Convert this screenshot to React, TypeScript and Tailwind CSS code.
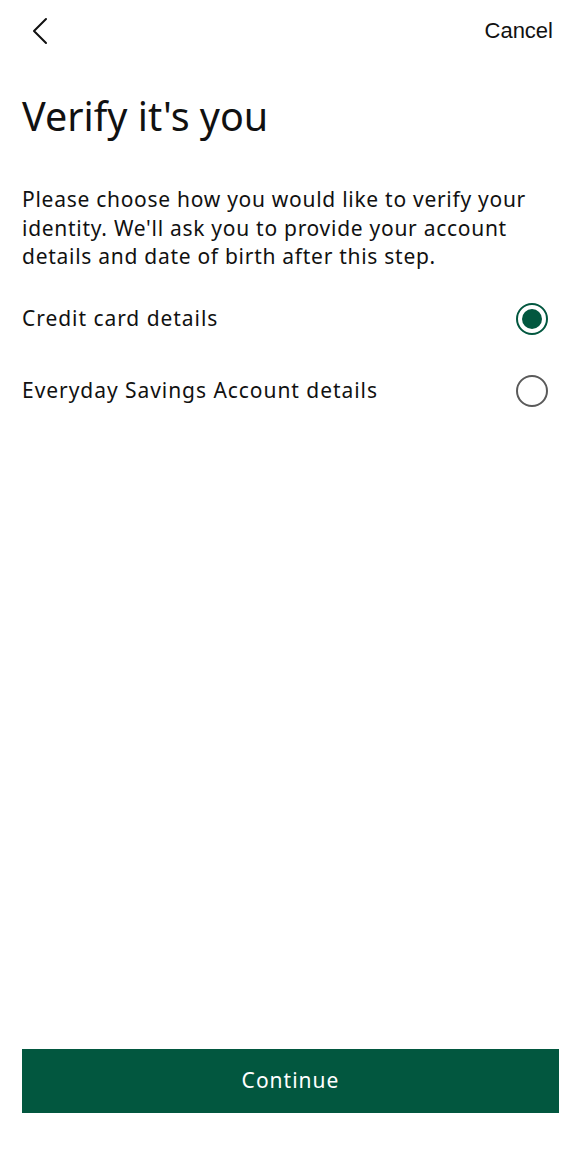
import React, { useState } from "react";

export default function App() {
  const [sel, setSel] = useState(0);
  const options = ["Credit card details", "Everyday Savings Account details"];
  return (
    <div className="flex min-h-[1163px] w-full flex-col bg-white text-black">
      <div className="flex h-[62px] items-center justify-between pl-[31px] pr-[28px]">
        <svg width="18" height="28" viewBox="0 0 18 28" fill="none">
          <path d="M15 2 L3 14 L15 26" stroke="#111" strokeWidth="2" strokeLinecap="round" strokeLinejoin="round" />
        </svg>
        <span className="text-[22px] leading-none text-[#111]" style={{ fontFamily: '"Liberation Sans", Arial, sans-serif' }}>
          Cancel
        </span>
      </div>
      <div className="px-[22px]" style={{ fontFamily: '"Noto Sans", sans-serif' }}>
        <h1 className="mt-[28px] text-[39.5px] leading-[52px] font-normal text-[#111]">Verify it's you</h1>
        <p className="mt-[43px] text-[21px] leading-[28.5px] tracking-[0.72px] text-[#111]">
          Please choose how you would like to verify your identity. We'll ask you to provide your account details and date of birth after this step.
        </p>
        <div className="mt-[12px] flex flex-col">
          {options.map((o, i) => (
            <button
              key={o}
              onClick={() => setSel(i)}
              className="flex h-[72px] items-center justify-between pr-[11px] text-left"
            >
              <span className="text-[21px] tracking-[0.95px] text-[#111]">{o}</span>
              {sel === i ? (
                <span className="flex h-[32px] w-[32px] items-center justify-center rounded-full border-2 border-[#02573f]">
                  <span className="h-[20px] w-[20px] rounded-full bg-[#02573f]" />
                </span>
              ) : (
                <span className="h-[32px] w-[32px] rounded-full border-2 border-[#5a5a5a]" />
              )}
            </button>
          ))}
        </div>
      </div>
      <div className="mt-auto px-[22px] pb-[50px] pr-[22px]" style={{ fontFamily: '"Noto Sans", sans-serif' }}>
        <button className="flex h-[64px] w-[537px] items-center justify-center bg-[#02573f] text-[21px] tracking-[1px] text-white">
          Continue
        </button>
      </div>
    </div>
  );
}
